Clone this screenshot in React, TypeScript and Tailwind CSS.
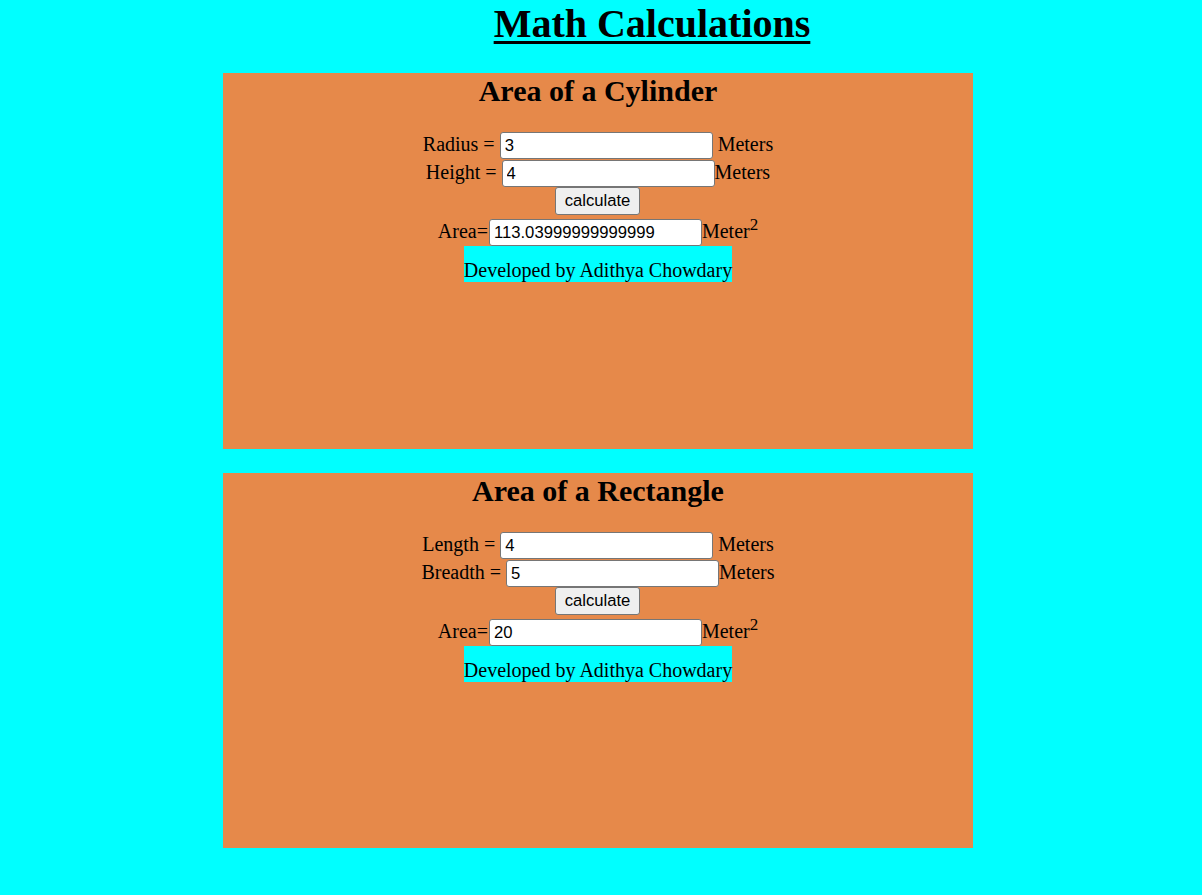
import React from "react";

const inputCls =
  "w-[213px] h-[27px] border border-[#767676] rounded-[3px] bg-white px-[4px] text-[16.67px] text-black font-['Liberation_Sans',Arial,sans-serif] outline-none";

function Panel({
  title,
  l1,
  v1,
  l2,
  v2,
  area,
  h,
}: {
  title: string;
  l1: string;
  v1: string;
  l2: string;
  v2: string;
  area: string;
  h: string;
}) {
  return (
    <div className={`w-[750px] ${h} bg-[#e6894a] flex flex-col items-center text-black`}>
      <h2 className="text-[30px] font-bold leading-[34px] pt-[1px] mb-[24px]">{title}</h2>
      <div className="flex items-baseline justify-center h-[28px] text-[20px] leading-[23px]">
        <span>{l1} =</span>
        <input className={`${inputCls} ml-[5px]`} defaultValue={v1} readOnly />
        <span className="ml-[5px]">Meters</span>
      </div>
      <div className="flex items-baseline justify-center h-[27px] text-[20px] leading-[23px]">
        <span>{l2} =</span>
        <input className={`${inputCls} ml-[5px]`} defaultValue={v2} readOnly />
        <span>Meters</span>
      </div>
      <div className="h-[28px] flex items-start pr-[1px]">
        <button className="w-[85px] h-[28px] bg-[#efefef] border border-[#767676] rounded-[3px] text-[16.67px] text-black font-['Liberation_Sans',Arial,sans-serif] leading-none">
          calculate
        </button>
      </div>
      <div className="flex items-baseline justify-center h-[27px] mt-[4px] text-[20px] leading-[23px]">
        <span className="mr-[1px]">Area=</span>
        <input className={inputCls} defaultValue={area} readOnly />
        <span>
          Meter<span className="relative -top-[8px] text-[17px] leading-none">2</span>
        </span>
      </div>
      <div className="bg-[#00ffff] h-[36px] pt-[13px] text-[20px] leading-[23px] whitespace-nowrap">
        Developed by Adithya Chowdary
      </div>
    </div>
  );
}

export default function App() {
  return (
    <div className="min-h-[895px] w-full bg-[#00ffff] font-['Liberation_Serif','Times_New_Roman',serif] text-black">
      <div className="h-[46px] mb-[27px] pt-[1px] flex justify-center pl-[102px]">
        <h1 className="text-[40px] font-bold leading-[45px] underline decoration-[3px] underline-offset-[4px]">
          Math Calculations
        </h1>
      </div>
      <div className="ml-[223px]">
        <Panel
          title="Area of a Cylinder"
          l1="Radius"
          v1="3"
          l2="Height"
          v2="4"
          area="113.03999999999999"
          h="h-[376px]"
        />
        <div className="h-[24px]" />
        <Panel
          title="Area of a Rectangle"
          l1="Length"
          v1="4"
          l2="Breadth"
          v2="5"
          area="20"
          h="h-[375px]"
        />
      </div>
    </div>
  );
}
